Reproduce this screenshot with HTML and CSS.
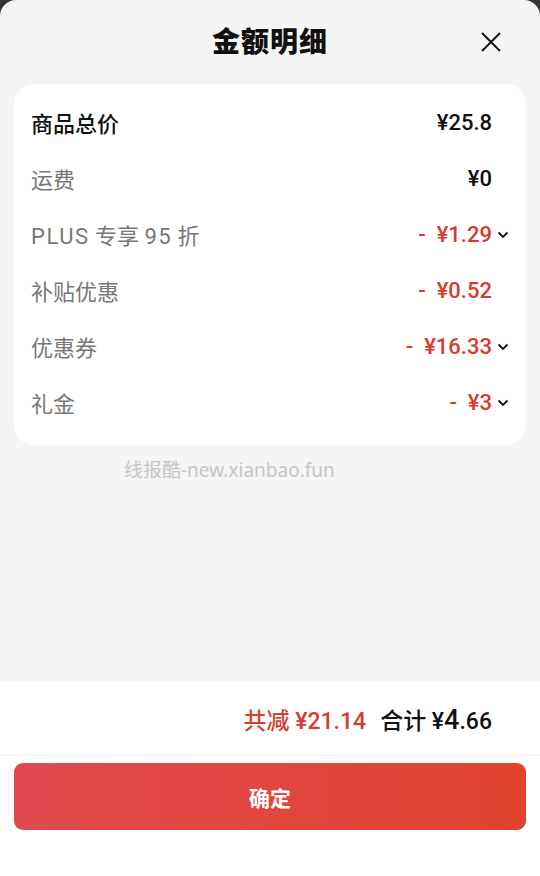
FILE: index.html
```html
<!DOCTYPE html>
<html lang="zh-CN">
<head>
    <meta charset="UTF-8">
    <meta name="viewport" content="width=device-width, initial-scale=1.0">
    <title>金额明细</title>
    <link rel="stylesheet" href="styles.css">
</head>
<body>
    <div class="sheet">
        <div class="header">
            <h1 class="title">金额明细</h1>
            <span class="close">
                <svg width="22" height="22" viewBox="0 0 22 22"><path d="M2 2L20 20M20 2L2 20" stroke="#111" stroke-width="2" fill="none"/></svg>
            </span>
        </div>

        <div class="card">
            <div class="row main">
                <span class="label">商品总价</span>
                <span class="value">¥25.8</span>
            </div>
            <div class="row">
                <span class="label">运费</span>
                <span class="value">¥0</span>
            </div>
            <div class="row">
                <span class="label"><span class="latin">PLUS</span> 专享 <span class="latin">95</span> 折</span>
                <span class="value red">-&nbsp; ¥1.29<i class="chev"><svg width="12" height="8" viewBox="0 0 12 8"><path d="M1.5 1.5L6 6L10.5 1.5" stroke="#111" stroke-width="1.8" fill="none"/></svg></i></span>
            </div>
            <div class="row">
                <span class="label">补贴优惠</span>
                <span class="value red">-&nbsp; ¥0.52</span>
            </div>
            <div class="row">
                <span class="label">优惠券</span>
                <span class="value red">-&nbsp; ¥16.33<i class="chev"><svg width="12" height="8" viewBox="0 0 12 8"><path d="M1.5 1.5L6 6L10.5 1.5" stroke="#111" stroke-width="1.8" fill="none"/></svg></i></span>
            </div>
            <div class="row">
                <span class="label">礼金</span>
                <span class="value red">-&nbsp; ¥3<i class="chev"><svg width="12" height="8" viewBox="0 0 12 8"><path d="M1.5 1.5L6 6L10.5 1.5" stroke="#111" stroke-width="1.8" fill="none"/></svg></i></span>
            </div>
        </div>

        <p class="mark">线报酷-new.xianbao.fun</p>

        <div class="footer">
            <div class="summary">
                <span class="cut">共减 ¥21.14</span>
                <span class="total">合计 ¥<b>4</b>.66</span>
            </div>
            <button class="ok">确定</button>
        </div>
    </div>
</body>
</html>
```

FILE: styles.css
```css
*{margin: 0; padding: 0; box-sizing: border-box;}
body{background-color: #333; font-family: Roboto, "Noto Sans CJK SC", sans-serif; width: 540px; height: 876px; overflow: hidden;}
.sheet{height: 876px; background-color: #f5f5f5; border-radius: 16px 16px 0 0; display: flex; flex-direction: column;}
.header{height: 84px; padding-bottom: 4px; display: flex; justify-content: center; align-items: center; position: relative;}
.title{font-family: "Noto Sans CJK SC", sans-serif; font-size: 28px; font-weight: 900; color: #111; letter-spacing: 1px;}
.close{position: absolute; right: 38px; top: 31px; display: flex;}
.card{margin: 0 14px; background-color: #fff; border-radius: 20px; padding: 10px 17px 15px 17px;}
.row{height: 56px; display: flex; justify-content: space-between; align-items: center; font-size: 22px; color: #777;}
.row.main{color: #111; font-weight: 500;}
.latin{letter-spacing: 1.5px;}
.value{color: #111; font-weight: 500; display: flex; align-items: center; padding-right: 17px; position: relative;}
.value.red{color: #d53e2d;}
.chev{position: absolute; right: 0; top: 50%; margin-top: -3px; display: flex;}
.mark{font-family: "Noto Sans", sans-serif; font-size: 19px; color: #c6c6c6; padding-left: 124px; margin-top: 11px; line-height: 28px;}
.footer{margin-top: auto; height: 194px; background-color: #fff;}
.summary{height: 74px; border-bottom: 1px solid #eee; display: flex; justify-content: flex-end; align-items: center; gap: 14px; padding-right: 48px; font-size: 23px; font-weight: 500;}
.cut{color: #d53e2d;}
.total{color: #111;}
.total b{font-size: 27px; font-weight: 500;}
.ok{display: block; width: 512px; height: 67px; margin: 7px 14px 0 14px; border: none; border-radius: 9px; background: linear-gradient(90deg, #e04a4f, #e2432e); color: #fff; font-family: "Noto Sans CJK SC", sans-serif; font-size: 21px; font-weight: 700;}
```
